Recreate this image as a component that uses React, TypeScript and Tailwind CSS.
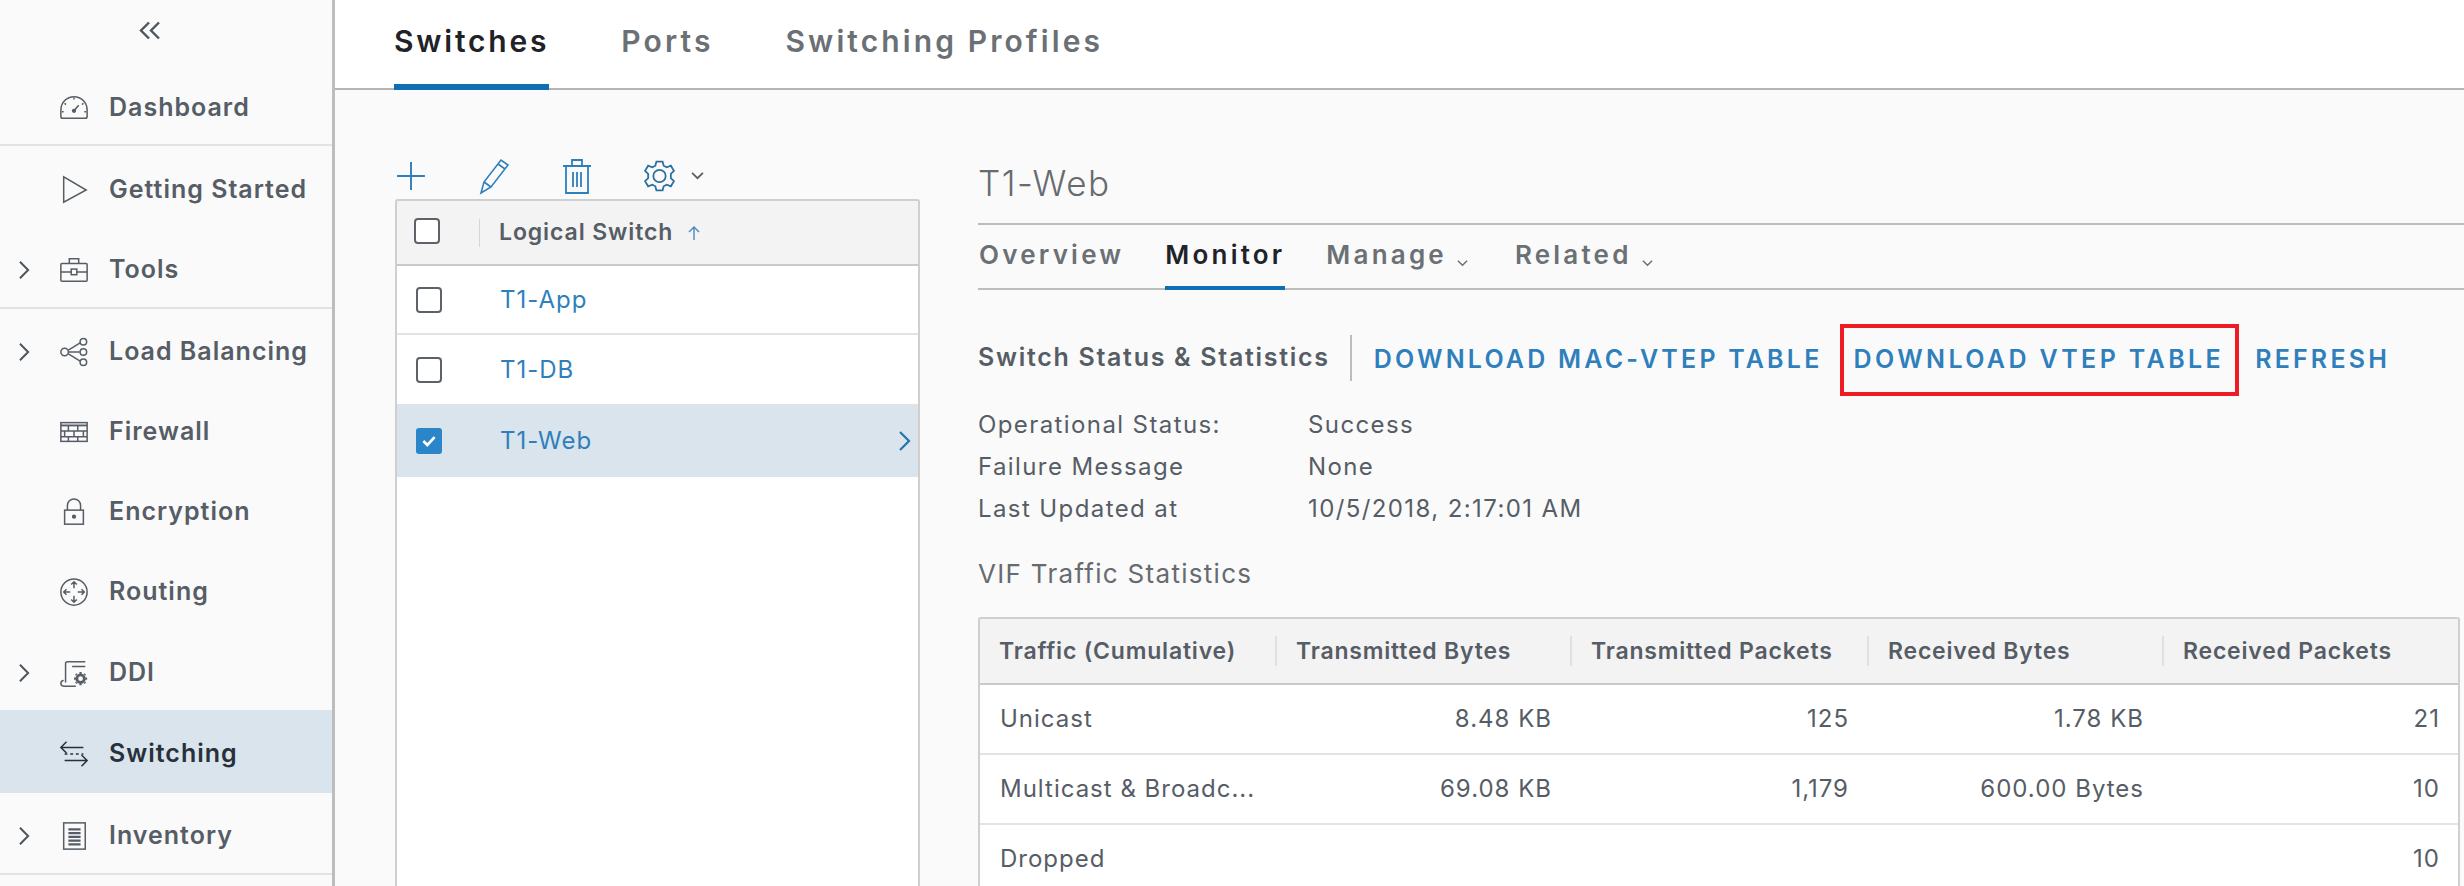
import type { ReactNode } from 'react';

const navItems = [
  { label: 'Dashboard', icon: 'dashboard', height: 'h-[80px]', divider: true },
  { label: 'Getting Started', icon: 'play', height: 'h-[82px]' },
  { label: 'Tools', icon: 'tools', height: 'h-[81px]', expand: true, divider: true },
  { label: 'Load Balancing', icon: 'balance', height: 'h-[80px]', expand: true },
  { label: 'Firewall', icon: 'firewall', height: 'h-[80px]' },
  { label: 'Encryption', icon: 'lock', height: 'h-[80px]' },
  { label: 'Routing', icon: 'routing', height: 'h-[81px]' },
  { label: 'DDI', icon: 'ddi', height: 'h-[80px]', expand: true },
  { label: 'Switching', icon: 'switching', height: 'h-[83px]', active: true },
  { label: 'Inventory', icon: 'inventory', height: 'h-[82px]', expand: true, divider: true },
];

const navIcons: Record<string, ReactNode> = {
  dashboard: (
    <>
      <path d="M4 27h24a2 2 0 0 0 2-2v-7a14 14 0 0 0-28 0v7a2 2 0 0 0 2 2z" />
      <path d="M16 19l5-6" />
      <circle cx="16" cy="19" r="1.5" fill="currentColor" />
      <path d="M16 5v3M6 11l2 2M26 11l-2 2M3 20h3M29 20h-3" strokeDasharray="2 1" />
    </>
  ),
  play: <path d="M5 2v27l24-13z" />,
  tools: (
    <>
      <rect x="2" y="9" width="28" height="19" rx="1" />
      <path d="M11 9V4h10v5M2 18h11M19 18h11" />
      <rect x="13" y="15" width="6" height="6" />
    </>
  ),
  balance: (
    <>
      <circle cx="6" cy="16" r="4" />
      <circle cx="26" cy="5" r="3.5" />
      <circle cx="26" cy="16" r="3.5" />
      <circle cx="26" cy="27" r="3.5" />
      <path d="M10 14l13-8M10 16h12M10 18l13 8" />
    </>
  ),
  firewall: (
    <>
      <rect x="2" y="6" width="28" height="20" />
      <path d="M2 9h28" strokeWidth="2" />
      <path d="M2 15h28M2 21h28M10 9v6M20 9v6M6 15v6M16 15v6M26 15v6M10 21v5M20 21v5" />
    </>
  ),
  lock: (
    <>
      <rect x="6" y="14" width="20" height="15" />
      <path d="M9 14V9a7 7 0 0 1 14 0v5" />
      <circle cx="16" cy="21" r="1.5" fill="currentColor" />
    </>
  ),
  routing: (
    <>
      <circle cx="16" cy="16" r="14" />
      <path d="M16 5v7M13 8l3-3 3 3M16 27v-7M13 24l3 3 3-3M5 16h7M8 13l-3 3 3 3M27 16h-7M24 13l3 3-3 3" />
    </>
  ),
  ddi: (
    <>
      <path d="M28 4H9a2 2 0 0 0-2 2v20M28 9H14M5 24a3 3 0 0 0 0 6h13" />
      <circle cx="23" cy="22" r="4" strokeWidth="3" />
      <path d="M23 15v2M23 27v2M16 22h2M28 22h2M18 17l1 1M27 26l1 1M28 17l-1 1M19 26l-1 1" strokeWidth="2.4" />
    </>
  ),
  switching: (
    <>
      <path d="M2 9h24M8 3L2 9l6 6M30 23H6M24 17l6 6-6 6" />
      <path d="M6 16h20" strokeDasharray="3 3" />
    </>
  ),
  inventory: (
    <>
      <rect x="5" y="2" width="23" height="28" />
      <path d="M10 9h13M10 13h13M10 17h13M10 21h13M10 25h13" strokeWidth="2.4" />
    </>
  ),
};

function Chevron({ className }: { className: string }) {
  return (
    <svg viewBox="0 0 14 22" fill="none" stroke="currentColor" strokeWidth="2.2" className={className}>
      <path d="M2 2l9 9-9 9" />
    </svg>
  );
}

function ChevronDown({ className }: { className: string }) {
  return (
    <svg viewBox="0 0 12 8" fill="none" stroke="currentColor" strokeWidth="1.6" className={className}>
      <path d="M1 1.5l5 5 5-5" />
    </svg>
  );
}

function Sidebar() {
  return (
    <aside className="w-[335px] h-full shrink-0 bg-[#fafafa] border-r-[3px] border-[#bdbdbd] flex flex-col">
      <div className="h-[66px] shrink-0 pl-[139px] pt-[21px] text-[#4d5660]">
        <svg viewBox="0 0 22 18" fill="none" stroke="currentColor" strokeWidth="2.4" className="w-[22px] h-[19px]">
          <path d="M10 1L2 9l8 8M20 1l-8 8 8 8" />
        </svg>
      </div>
      {navItems.map((item) => (
        <div
          key={item.label}
          className={`${item.height} shrink-0 flex items-center pt-[5px] ${item.active ? 'bg-[#d9e4ec] text-[#27313b]' : 'text-[#565d66]'} ${item.divider ? 'border-b-2 border-[#e3e3e3]' : ''}`}
        >
          <div className="w-[59px] shrink-0 pl-[18px]">
            {item.expand && <Chevron className="w-[13px] h-[20px] text-[#4d5660]" />}
          </div>
          <svg viewBox="0 0 32 32" fill="none" stroke="currentColor" strokeWidth="1.6" className="w-[30px] h-[30px] shrink-0">
            {navIcons[item.icon]}
          </svg>
          <span className="ml-[20px] text-[25px] tracking-[1px] font-semibold whitespace-nowrap">
            {item.label}
          </span>
        </div>
      ))}
    </aside>
  );
}

function TopTabs() {
  const tabs = [
    { label: 'Switches', active: true },
    { label: 'Ports' },
    { label: 'Switching Profiles' },
  ];
  return (
    <div className="h-[90px] shrink-0 bg-white border-b-2 border-[#b4b4b4] pl-[59px] flex gap-[72px]">
      {tabs.map((tab) => (
        <div
          key={tab.label}
          className={`h-[90px] pt-[19px] text-[30px] font-semibold ${tab.active ? 'tracking-[2.8px] border-b-[6px] border-[#0f6fb5] text-[#1f2329]' : 'tracking-[3.1px] text-[#6b7075]'}`}
        >
          {tab.label}
        </div>
      ))}
    </div>
  );
}

function Checkbox({ checked }: { checked?: boolean }) {
  if (checked) {
    return (
      <div className="w-[26px] h-[26px] rounded-[3px] bg-[#2a86c8] flex items-center justify-center">
        <svg viewBox="0 0 16 16" fill="none" stroke="white" strokeWidth="2.4" className="w-[18px] h-[18px]">
          <path d="M3 8l3.500 3.500L13 4.500" />
        </svg>
      </div>
    );
  }
  return <div className="w-[26px] h-[26px] rounded-[4px] border-2 border-[#5d6269] bg-white" />;
}

function Toolbar() {
  return (
    <div className="h-[47px] flex items-center text-[#2f7fbc]">
      <svg viewBox="0 0 28 28" fill="none" stroke="currentColor" strokeWidth="1.8" className="w-[30px] h-[30px] ml-[1px]">
        <path d="M14 1v26M1 14h26" />
      </svg>
      <svg viewBox="0 0 32 38" fill="none" stroke="currentColor" strokeWidth="1.600" className="w-[36px] h-[38px] ml-[51px]">
        <path d="M2 36l3-11L22 3l7 5-17 22zM5 25l7 5M19 7l7 5" />
      </svg>
      <svg viewBox="0 0 30 38" fill="none" stroke="currentColor" strokeWidth="1.8" className="w-[30px] h-[38px] ml-[49px]">
        <path d="M1 9h28M10 9V3h10v6M4 9v27h22V9M11 15v15M15 15v15M19 15v15" />
      </svg>
      <svg viewBox="0 0 32 32" fill="none" stroke="currentColor" strokeWidth="1.7" className="w-[33px] h-[36px] ml-[51px] text-[#2a6f9f]">
        <path d="M13 2h6l1 4 3 1.500 4-1.500 3 5-3 3v4l3 3-3 5-4-1.500-3 1.500-1 4h-6l-1-4-3-1.500-4 1.500-3-5 3-3v-4l-3-3 3-5 4 1.500 3-1.500z" />
        <circle cx="16" cy="16" r="6" />
      </svg>
      <ChevronDown className="w-[13px] h-[9px] ml-[15px] text-[#565d66]" />
    </div>
  );
}

function LogicalSwitchGrid() {
  const rows = [
    { name: 'T1-App', height: 'h-[69px]' },
    { name: 'T1-DB', height: 'h-[71px]' },
    { name: 'T1-Web', height: 'h-[71px]', selected: true },
  ];
  return (
    <div className="flex-1 bg-white border-2 border-b-0 border-[#cfcfcf] rounded-t-[3px]">
      <div className="h-[65px] bg-[#f3f3f3] border-b-2 border-[#c9c9c9] flex items-center pl-[17px]">
        <div className="-mt-[3px]">
          <Checkbox />
        </div>
        <div className="w-px h-[28px] bg-[#d6d6d6] ml-[39px]" />
        <span className="ml-[19px] text-[23px] tracking-[0.9px] font-semibold text-[#565d66]">Logical Switch</span>
        <svg viewBox="0 0 14 16" fill="none" stroke="currentColor" strokeWidth="1.4" className="w-[14px] h-[16px] ml-[14px] text-[#4a88c0]">
          <path d="M7 15V2M2 7l5-5 5 5" />
        </svg>
      </div>
      {rows.map((row) => (
        <div
          key={row.name}
          className={`${row.height} flex items-center pl-[19px] pr-[6px] border-b-2 ${row.selected ? 'bg-[#d9e4ec] border-[#d9e4ec]' : 'border-[#e3e3e3]'}`}
        >
          <Checkbox checked={row.selected} />
          <span className="ml-[58px] text-[24px] tracking-[1px] text-[#2f7fbc]">{row.name}</span>
          {row.selected && <Chevron className="w-[14px] h-[22px] ml-auto text-[#2574ad]" />}
        </div>
      ))}
    </div>
  );
}

function SubTabs() {
  const tabs = [
    { label: 'Overview', gap: 'mr-[41px]' },
    { label: 'Monitor', gap: 'mr-[41px]', active: true },
    { label: 'Manage', gap: 'mr-[47px]', menu: true },
    { label: 'Related', menu: true },
  ];
  return (
    <div className="h-[67px] pl-[1px] border-y-2 border-[#bdbdbd] flex">
      {tabs.map((tab) => (
        <div key={tab.label} className={`${tab.gap ?? ''} flex items-start`}>
          <div
            className={`h-[65px] pt-[10px] text-[26px] font-semibold tracking-[3.2px] ${tab.active ? 'border-b-4 border-[#0f6fb5] text-[#1f2329]' : 'text-[#6b7075]'}`}
          >
            {tab.label}
          </div>
          {tab.menu && <ChevronDown className="w-[11px] h-[8px] ml-[10px] mt-[34px] text-[#6b7075]" />}
        </div>
      ))}
    </div>
  );
}

function StatusBar() {
  return (
    <div className="h-[48px] mt-[45px] flex items-center">
      <span className="text-[25px] tracking-[1.7px] font-semibold text-[#565d66] whitespace-nowrap">Switch Status &amp; Statistics</span>
      <div className="w-[2px] h-[46px] bg-[#bdbdbd] ml-[20px]" />
      <a className="ml-[22px] mt-[4px] text-[25px] font-semibold tracking-[3.2px] text-[#2f7fbc] whitespace-nowrap">DOWNLOAD MAC-VTEP TABLE</a>
      <a className="relative ml-[31px] mt-[4px] text-[25px] font-semibold tracking-[3.4px] text-[#2f7fbc] whitespace-nowrap">
        DOWNLOAD VTEP TABLE
        <span className="absolute -left-[13px] -right-[15px] -top-[17px] -bottom-[17px] border-[4px] border-[#ee1c25]" />
      </a>
      <a className="ml-[31px] mt-[4px] text-[25px] font-semibold tracking-[3.2px] text-[#2f7fbc] whitespace-nowrap">REFRESH</a>
    </div>
  );
}

function StatusDetails() {
  const details = [
    ['Operational Status:', 'Success'],
    ['Failure Message', 'None'],
    ['Last Updated at', '10/5/2018, 2:17:01 AM'],
  ];
  return (
    <div className="mt-[23px] text-[24px] tracking-[1.4px] text-[#565d66]">
      {details.map(([label, value]) => (
        <div key={label} className="h-[42px] flex items-center">
          <span className="w-[330px] shrink-0">{label}</span>
          <span>{value}</span>
        </div>
      ))}
    </div>
  );
}

function TrafficTable() {
  const headers = ['Traffic (Cumulative)', 'Transmitted Bytes', 'Transmitted Packets', 'Received Bytes', 'Received Packets'];
  const rows = [
    { height: 'h-[70px]', cells: ['Unicast', '8.48 KB', '125', '1.78 KB', '21'] },
    { height: 'h-[70px]', cells: ['Multicast & Broadc...', '69.08 KB', '1,179', '600.00 Bytes', '10'] },
    { height: 'h-[70px]', cells: ['Dropped', '', '', '', '10'] },
  ];
  return (
    <div className="mt-[23px] mr-[4px] flex-1 bg-white border-2 border-b-0 border-[#cfcfcf] rounded-t-[3px]">
      <div className="h-[66px] bg-[#f3f3f3] border-b-2 border-[#c9c9c9] grid grid-cols-[295px_295px_297px_295px_1fr] items-center">
        {headers.map((header, index) => (
          <div key={header} className={`h-[30px] flex items-center pl-[19px] text-[23px] tracking-[0.8px] font-semibold text-[#565d66] whitespace-nowrap ${index > 0 ? 'border-l-2 border-[#e0e0e0]' : ''}`}>
            {header}
          </div>
        ))}
      </div>
      {rows.map((row) => (
        <div key={row.cells[0]} className={`${row.height} border-b-2 border-[#e3e3e3] grid grid-cols-[295px_295px_297px_295px_1fr] items-center text-[24px] tracking-[1px] text-[#565d66]`}>
          {row.cells.map((cell, index) => (
            <div key={index} className={`whitespace-nowrap ${index === 0 ? 'pl-[20px]' : 'pr-[18px] text-right'}`}>
              {cell}
            </div>
          ))}
        </div>
      ))}
    </div>
  );
}

export default function App() {
  return (
    <div className="w-[2464px] h-[886px] overflow-hidden flex bg-[#fafafa] font-['Inter',sans-serif]">
      <Sidebar />
      <main className="flex-1 min-w-0 flex flex-col">
        <TopTabs />
        <div className="flex-1 min-h-0 flex pl-[60px]">
          <section className="w-[525px] shrink-0 pt-[62px] flex flex-col">
            <Toolbar />
            <LogicalSwitchGrid />
          </section>
          <section className="flex-1 min-w-0 ml-[58px] flex flex-col">
            <h1 className="h-[43px] mt-[72px] mb-[18px] text-[35px] tracking-[1.5px] leading-[43px] font-light text-[#666b70]">T1-Web</h1>
            <SubTabs />
            <StatusBar />
            <StatusDetails />
            <h2 className="mt-[24px] text-[26px] tracking-[1.3px] leading-[40px] text-[#666b70]">VIF Traffic Statistics</h2>
            <TrafficTable />
          </section>
        </div>
      </main>
    </div>
  );
}
